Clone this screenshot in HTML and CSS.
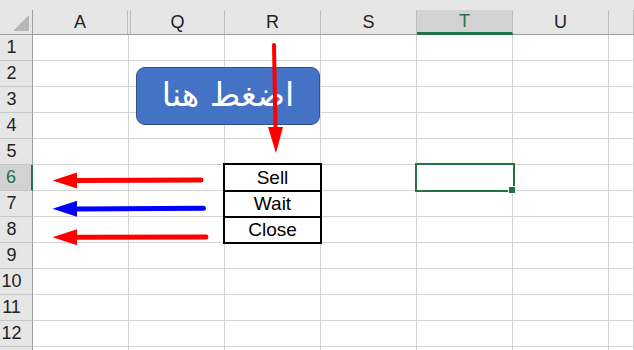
FILE: index.html
```html
<!DOCTYPE html>
<html lang="ar">
<head>
<meta charset="utf-8">
<title>Sheet</title>
<link rel="stylesheet" href="styles.css">
</head>
<body>
<div class="sheet">
  <div class="corner"><div class="in"><svg class="tri" width="32" height="24" viewBox="0 0 32 24"><polygon points="29,5 29,21 13,21" fill="#b7b7b7"/></svg></div></div>
  <div class="ch cha"><div class="in">A</div></div>
  <div class="ch chq"><div class="in">Q</div></div>
  <div class="ch"><div class="in">R</div></div>
  <div class="ch"><div class="in">S</div></div>
  <div class="ch sel"><div class="in">T</div></div>
  <div class="ch"><div class="in">U</div></div>
  <div class="ch"><div class="in"></div></div>

  <div class="rh">1</div><div class="c"></div><div class="c"></div><div class="c"></div><div class="c"></div><div class="c"></div><div class="c"></div><div class="c"></div>
  <div class="rh">2</div><div class="c"></div><div class="c"></div><div class="c"></div><div class="c"></div><div class="c"></div><div class="c"></div><div class="c"></div>
  <div class="rh">3</div><div class="c"></div><div class="c"></div><div class="c"></div><div class="c"></div><div class="c"></div><div class="c"></div><div class="c"></div>
  <div class="rh">4</div><div class="c"></div><div class="c"></div><div class="c"></div><div class="c"></div><div class="c"></div><div class="c"></div><div class="c"></div>
  <div class="rh">5</div><div class="c"></div><div class="c"></div><div class="c"></div><div class="c"></div><div class="c"></div><div class="c"></div><div class="c"></div>
  <div class="rh sel">6</div><div class="c"></div><div class="c"></div><div class="c tb tb1">Sell</div><div class="c"></div><div class="c act"><span class="fill"></span></div><div class="c"></div><div class="c"></div>
  <div class="rh">7</div><div class="c"></div><div class="c"></div><div class="c tb tbn">Wait</div><div class="c"></div><div class="c"></div><div class="c"></div><div class="c"></div>
  <div class="rh">8</div><div class="c"></div><div class="c"></div><div class="c tb tbn">Close</div><div class="c"></div><div class="c"></div><div class="c"></div><div class="c"></div>
  <div class="rh">9</div><div class="c"></div><div class="c"></div><div class="c"></div><div class="c"></div><div class="c"></div><div class="c"></div><div class="c"></div>
  <div class="rh">10</div><div class="c"></div><div class="c"></div><div class="c"></div><div class="c"></div><div class="c"></div><div class="c"></div><div class="c"></div>
  <div class="rh">11</div><div class="c"></div><div class="c"></div><div class="c"></div><div class="c"></div><div class="c"></div><div class="c"></div><div class="c"></div>
  <div class="rh">12</div><div class="c"></div><div class="c"></div><div class="c"></div><div class="c"></div><div class="c"></div><div class="c"></div><div class="c"></div>
  <div class="rh"></div><div class="c"></div><div class="c"></div><div class="c"></div><div class="c"></div><div class="c"></div><div class="c"></div><div class="c"></div>

  <div class="btn" dir="rtl">اضغط هنا</div>
  <svg class="shapes" width="634" height="350" viewBox="0 0 634 350">
    <line x1="274" y1="45" x2="275.5" y2="130" stroke="#ff0000" stroke-width="4" stroke-linecap="round"/>
    <polygon points="268,127 283,127 276,153" fill="#ff0000"/>
    <line x1="76" y1="180.5" x2="201" y2="180" stroke="#ff0000" stroke-width="5" stroke-linecap="round"/>
    <polygon points="52.5,180.5 77,172.5 77,188.5" fill="#ff0000"/>
    <line x1="76" y1="209" x2="203.5" y2="208.3" stroke="#0000ff" stroke-width="5" stroke-linecap="round"/>
    <polygon points="52.5,208.8 77,200.8 77,216.8" fill="#0000ff"/>
    <line x1="76" y1="237.3" x2="206" y2="237" stroke="#ff0000" stroke-width="5" stroke-linecap="round"/>
    <polygon points="52.5,237.3 77,229.3 77,245.3" fill="#ff0000"/>
  </svg>
</div>
</body>
</html>
```

FILE: styles.css
```css
* { box-sizing: border-box; margin: 0; padding: 0; }
html, body { width: 634px; height: 350px; overflow: hidden; background: #ffffff; }
body { font-family: "Liberation Sans", Arial, sans-serif; color: #222222; }

.sheet {
  position: relative;
  display: grid;
  grid-template-columns: 33px repeat(6, 96px) 1fr;
  grid-template-rows: 35px repeat(13, 26px);
  width: 634px;
  height: 350px;
  overflow: hidden;
  background: #ffffff;
}

.corner, .ch {
  background: #e6e6e6;
  border-bottom: 1px solid #9f9f9f;
  padding-top: 10px;
  display: flex;
}
.corner .in { flex: 1; border-right: 1px solid #9f9f9f; position: relative; }
.tri { display: block; }

.ch .in {
  flex: 1;
  border-right: 1px solid #bdbdbd;
  display: flex;
  align-items: center;
  justify-content: center;
  font-size: 18px;
  color: #222222;
}
.cha .in { margin-right: 1px; }
.chq .in { margin-left: 1px; border-left: 1px solid #bdbdbd; }
.ch.sel { border-bottom-color: #217346; }
.ch.sel .in { background: #d2d2d2; color: #217346; border-bottom: 2px solid #217346; }

.rh {
  background: #e6e6e6;
  border-right: 1px solid #9f9f9f;
  border-bottom: 1px solid #c6c6c6;
  display: flex;
  align-items: center;
  justify-content: center;
  padding-right: 9px;
  font-size: 18px;
  color: #222222;
}
.rh.sel { background: #d2d2d2; color: #217346; border-right: 2px solid #217346; }

.c { border-right: 1px solid #d4d4d4; border-bottom: 1px solid #d4d4d4; }

.tb {
  position: relative;
  border: 2px solid #000000;
  display: flex;
  align-items: center;
  justify-content: center;
  font-size: 19px;
  color: #000000;
}
.tb1 { margin: -2px -1px -1px -2px; }
.tbn { margin: -1px -1px -1px -2px; }

.act {
  position: relative;
  border: 2px solid #217346;
  margin: -2px -2px -1px -2px;
}
.fill {
  position: absolute;
  left: 91px;
  top: 21px;
  width: 8px;
  height: 8px;
  background: #217346;
  border: 1px solid #ffffff;
}

.btn {
  position: absolute;
  left: 136px;
  top: 67px;
  width: 184px;
  height: 58px;
  border-radius: 9px;
  background: #4472c4;
  border: 1.5px solid #2f528f;
  color: #ffffff;
  font-family: "DejaVu Sans", sans-serif;
  font-size: 33px;
  line-height: 1;
  padding-bottom: 4px;
  display: flex;
  align-items: center;
  justify-content: center;
}

.shapes {
  position: absolute;
  left: 0;
  top: 0;
  pointer-events: none;
}
```
